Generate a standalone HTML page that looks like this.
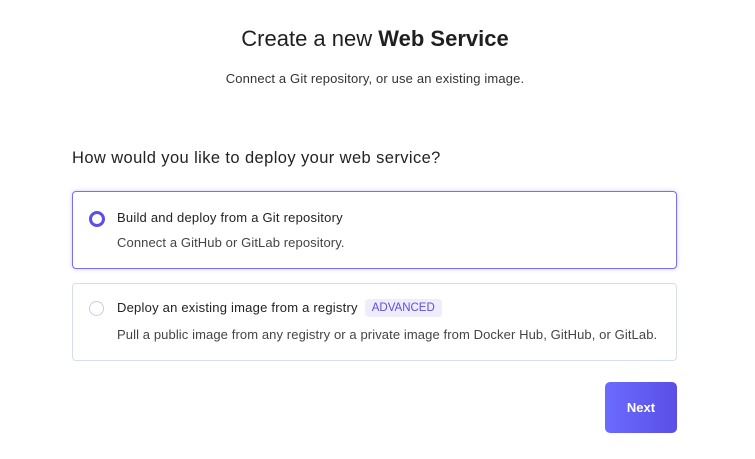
<!DOCTYPE html>
<html><head><style>
body{margin:0;width:755px;height:459px;background:#fff;font-family:"Liberation Sans",sans-serif;color:#222;position:relative;overflow:hidden}
.a{position:absolute}
h1{position:absolute;top:26px;left:0;width:750px;text-align:center;margin:0;font-size:22px;font-weight:normal;color:#1f1f1f}
.sub{top:71px;left:0;width:750px;text-align:center;font-size:13px;color:#333;letter-spacing:0.15px}
.q{top:149px;left:72px;font-size:16.5px;color:#222;letter-spacing:0.4px}
.card{left:72px;width:603px;border:1px solid #d6deeb;border-radius:4px;background:#fff}
.t{position:absolute;left:44px;font-size:13px;color:#222;letter-spacing:0.22px}
.d{position:absolute;left:44px;font-size:13px;color:#444;letter-spacing:0.1px}
.r{position:absolute;left:16px;width:10px;height:10px;border-radius:50%}
.badge{display:inline-block;background:#efedfd;color:#5a4fe0;font-size:11.5px;padding:3px 7px;border-radius:4px;margin-left:7px;vertical-align:1px;letter-spacing:0}
.btn{left:605px;top:382px;width:72px;height:51px;border-radius:5px;background:linear-gradient(90deg,#6c6bff,#5a4ee6);color:#fff;font-weight:bold;font-size:13px;line-height:51px;text-align:center}
</style></head><body>
<h1>Create a new <b>Web Service</b></h1>
<div class="a sub">Connect a Git repository, or use an existing image.</div>
<div class="a q">How would you like to deploy your web service?</div>
<div class="a card" style="top:191px;height:76px;border-color:#7b6ff0;box-shadow:0 0 4px rgba(110,95,240,.35)">
<div class="r" style="top:19px;border:3px solid #5b4fe6"></div>
<div class="t" style="top:18px">Build and deploy from a Git repository</div>
<div class="d" style="top:43px">Connect a GitHub or GitLab repository.</div>
</div>
<div class="a card" style="top:283px;height:76px">
<div class="r" style="top:17px;width:13px;height:13px;border:1px solid #c5cde0"></div>
<div class="t" style="top:15px">Deploy an existing image from a registry<span class="badge">ADVANCED</span></div>
<div class="d" style="top:43px">Pull a public image from any registry or a private image from Docker Hub, GitHub, or GitLab.</div>
</div>
<div class="a btn">Next</div>
</body></html>
